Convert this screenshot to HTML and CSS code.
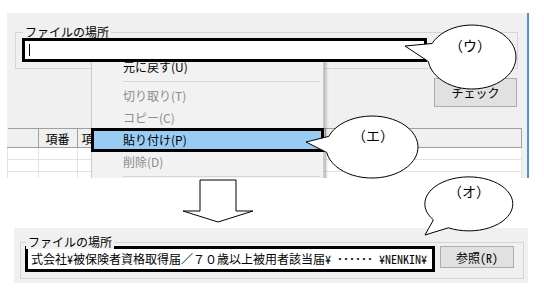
FILE: index.html
```html
<!DOCTYPE html>
<html lang="ja">
<head>
    <meta charset="UTF-8">
    <title>ファイルの場所</title>
    <link rel="stylesheet" href="styles.css">
</head>
<body>
    <div class="figure">
        <section class="shot shot-top">
            <div class="group">
                <span class="legend">ファイルの場所</span>
                <div class="field"><span class="caret"></span></div>
            </div>
            <div class="btn-row">
                <button class="btn btn-check">チェック</button>
            </div>
            <table class="grid">
                <thead>
                    <tr>
                        <th class="c0"></th>
                        <th class="c1">項番</th>
                        <th class="c2">項目名</th>
                        <th class="c3">お</th>
                        <th class="c4"></th>
                    </tr>
                </thead>
                <tbody>
                    <tr><td></td><td></td><td></td><td></td><td></td></tr>
                    <tr><td></td><td></td><td></td><td></td><td></td></tr>
                    <tr><td></td><td></td><td></td><td></td><td></td></tr>
                </tbody>
            </table>

            <ul class="menu">
                <li class="menu-item">元に戻す(U)</li>
                <li class="menu-sep"></li>
                <li class="menu-item off">切り取り(T)</li>
                <li class="menu-item off">コピー(C)</li>
                <li class="menu-item hot">貼り付け(P)</li>
                <li class="menu-item off">削除(D)</li>
                <li class="menu-sep"></li>
            </ul>
        </section>

        <section class="shot shot-bottom">
            <div class="group">
                <span class="legend">ファイルの場所</span>
                <div class="path-field">式会社¥被保険者資格取得届／７０歳以上被用者該当届¥ ･･････ ¥NENKIN¥</div>
                <button class="btn btn-ref">参照(R)</button>
            </div>
        </section>

        <svg class="notes" width="544" height="289" viewBox="0 0 544 289">
            <path d="M432.1 43.5 L405 46 L428.4 61.5 A44 32 0 1 0 432.1 43.5 Z"/>
            <text x="470" y="51">（ウ）</text>
            <path d="M328.8 136.4 L306 142 L326.7 152.4 A46 31 0 1 0 328.8 136.4 Z"/>
            <text x="373" y="141">（エ）</text>
            <path d="M433.4 219.9 L425 235 L448.4 227.8 A44 27 0 1 0 433.4 219.9 Z"/>
            <text x="469" y="197">（オ）</text>
            <path d="M200 180 H236 V211 H253 L218 222 L183 211 H200 Z"/>
        </svg>
    </div>
</body>
</html>
```

FILE: styles.css
```css
body {
    margin: 0;
    background-color: #ffffff;
    color: #000000;
    font-family: "Noto Sans CJK JP", sans-serif;
    font-size: 12px;
}
.figure {
    position: relative;
    width: 544px;
    height: 289px;
    overflow: hidden;
}
.shot {
    background-color: #f0f0f0;
}
.shot-top {
    position: relative;
    overflow: hidden;
    margin: 13px 0 0 7px;
    width: 520px;
    height: 165px;
    border-right: 2px solid #4a94e0;
}
.group {
    position: relative;
    border: 1px solid #d5d5d5;
}
.legend {
    position: absolute;
    top: -8px;
    left: 7px;
    padding: 0 2px;
    line-height: 14px;
    background-color: #f0f0f0;
}
.shot-top .group {
    margin: 19px 9px 0 8px;
    padding: 5px 90px 6px 6px;
}
.field {
    position: relative;
    z-index: 2;
    display: flex;
    align-items: center;
    height: 24px;
    box-sizing: border-box;
    padding-left: 4px;
    border: 3px solid #000000;
    background-color: #ffffff;
}
.caret {
    width: 1px;
    height: 12px;
    background-color: #000000;
}
.btn-row {
    display: flex;
    justify-content: flex-end;
    margin-top: 9px;
    padding-right: 10px;
}
.btn {
    padding: 0;
    border: 1px solid #adadad;
    background-color: #e1e1e1;
    color: #000000;
    font-family: "Noto Sans Mono CJK JP", "Noto Sans CJK JP", monospace;
    font-size: 12px;
}
.btn-check {
    width: 83px;
    height: 29px;
}
.grid {
    margin-top: 21px;
    width: 515px;
    border-collapse: collapse;
    table-layout: fixed;
}
.grid th {
    height: 18px;
    padding: 0;
    border: 1px solid #a0a0a0;
    border-left: none;
    background-color: #f0f0f0;
    font-weight: normal;
    text-align: center;
    white-space: nowrap;
    overflow: hidden;
    font-family: "Noto Sans Mono CJK JP", "Noto Sans CJK JP", monospace;
}
.grid th.c2,
.grid th.c3 {
    text-align: left;
    padding-left: 4px;
}
.grid td {
    height: 11px;
    padding: 0;
    border: 1px solid #e3e3e3;
    border-top: none;
    background-color: #ffffff;
}
.grid .c0 { width: 30px; }
.grid .c1 { width: 38px; }
.grid .c2 { width: 243px; }
.grid .c3 { width: 20px; }
.menu {
    position: absolute;
    left: 84px;
    top: 40px;
    z-index: 1;
    width: 233px;
    box-sizing: border-box;
    margin: 0;
    padding: 2px 0 10px;
    list-style: none;
    border: 1px solid #cccccc;
    background-color: #f2f2f2;
    box-shadow: 2px 2px 3px rgba(0, 0, 0, 0.25);
}
.menu-item {
    height: 22px;
    line-height: 22px;
    padding-left: 31px;
}
.menu-item.off {
    color: #8c8c8c;
}
.menu-item.hot {
    background-color: #99ccf3;
    outline: 3px solid #000000;
    outline-offset: -2px;
}
.menu-sep {
    height: 1px;
    margin: 3px 3px 3px 31px;
    background-color: #d7d7d7;
}
.shot-bottom {
    margin: 50px 0 0 14px;
    width: 514px;
    height: 55px;
    box-sizing: border-box;
    padding-top: 14px;
}
.shot-bottom .group {
    display: flex;
    align-items: flex-start;
    gap: 5px;
    margin: 0 4px 0 6px;
    padding: 3px 9px 6px 4px;
}
.shot-bottom .legend {
    left: 5px;
}
.path-field {
    width: 410px;
    height: 26px;
    box-sizing: border-box;
    padding-left: 3px;
    border: 3px solid #000000;
    background-color: #ffffff;
    line-height: 20px;
    white-space: nowrap;
    overflow: hidden;
    font-family: "Noto Sans Mono CJK JP", "Noto Sans CJK JP", monospace;
}
.btn-ref {
    width: 74px;
    height: 22px;
}
.notes {
    position: absolute;
    left: 0;
    top: 0;
    z-index: 5;
    pointer-events: none;
}
.notes path {
    fill: #ffffff;
    stroke: #000000;
    stroke-width: 1;
}
.notes text {
    font-family: "Noto Sans CJK JP", sans-serif;
    font-size: 14px;
    text-anchor: middle;
}
```
